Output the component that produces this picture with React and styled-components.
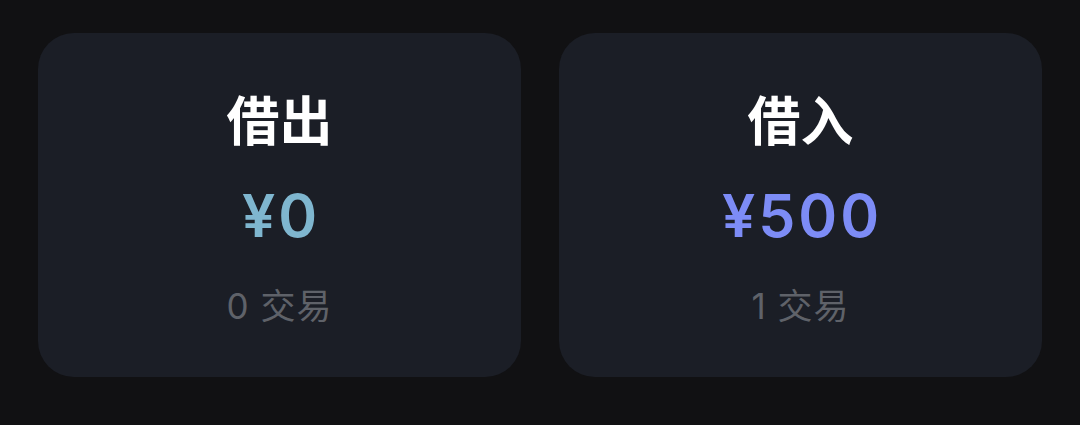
import styled, { createGlobalStyle } from 'styled-components';

const GlobalStyle = createGlobalStyle`
  html, body {
    margin: 0;
    padding: 0;
    background: #111113;
  }
  body {
    font-family: Inter, "Noto Sans CJK SC", sans-serif;
  }
`;

const Page = styled.div`
  width: 1080px;
  height: 425px;
  box-sizing: border-box;
  padding: 33px 38px 48px;
  display: grid;
  grid-template-columns: 1fr 1fr;
  gap: 38px;
  background: #111113;
`;

const Card = styled.div`
  background: #1b1e26;
  border-radius: 36px;
  display: flex;
  flex-direction: column;
  align-items: center;
  justify-content: center;
  padding-top: 6px;
`;

const Title = styled.div`
  color: #ffffff;
  font-family: "Noto Sans CJK SC", sans-serif;
  font-weight: 700;
  font-size: 53px;
  line-height: 1;
`;

const Amount = styled.div`
  color: ${({ $color }) => $color};
  font-family: Inter, sans-serif;
  font-weight: 600;
  font-size: 59px;
  line-height: 1;
  letter-spacing: 3px;
  margin-top: 41px;
  margin-right: -3px;
`;

const Count = styled.div`
  color: #5f6269;
  font-family: Inter, "Noto Sans CJK SC", sans-serif;
  font-size: 35px;
  line-height: 1;
  letter-spacing: 1px;
  margin-top: 44px;
`;

const stats = [
  { title: '借出', amount: '¥0', count: '0 交易', color: '#7fb6cf' },
  { title: '借入', amount: '¥500', count: '1 交易', color: '#7d8cf6' },
];

export default function App() {
  return (
    <>
      <GlobalStyle />
      <Page>
        {stats.map((s) => (
          <Card key={s.title}>
            <Title>{s.title}</Title>
            <Amount $color={s.color}>{s.amount}</Amount>
            <Count>{s.count}</Count>
          </Card>
        ))}
      </Page>
    </>
  );
}
